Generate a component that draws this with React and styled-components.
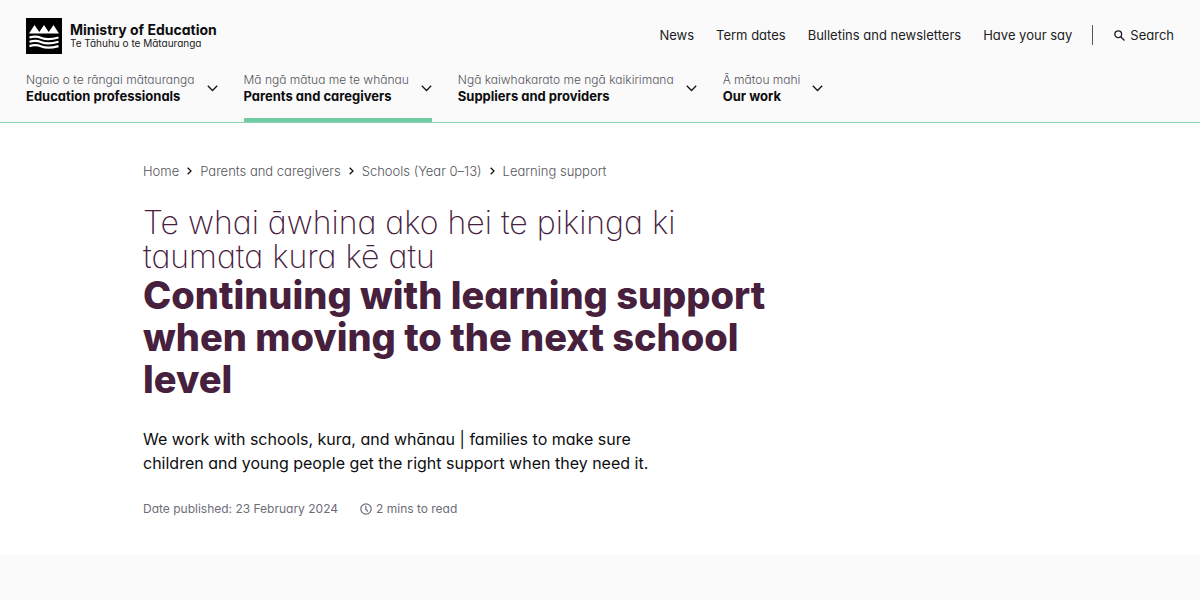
import React from 'react'
import styled, { createGlobalStyle, ThemeProvider } from 'styled-components'

const theme = {
	colors: {
		ink: '#0d0d0f',
		plum: '#46203d',
		text: '#1c1c22',
		muted: '#55555c',
		meta: '#6d6d7a',
		green: '#6fcba2',
		greenLine: '#8fd6b2',
		surface: '#fafafa',
	},
}

const GlobalStyle = createGlobalStyle`
	* {
		box-sizing: border-box;
	}

	body {
		margin: 0;
		background: white;
		color: ${theme.colors.text};
		font-family: Inter, 'Liberation Sans', sans-serif;
		font-feature-settings: 'cv11' 1;
		-webkit-font-smoothing: antialiased;
	}

	h1, p, ul, ol {
		margin: 0;
		padding: 0;
	}

	li {
		list-style: none;
	}

	a {
		color: inherit;
		text-decoration: none;
	}

	button {
		padding: 0;
		border: 0;
		background: none;
		color: inherit;
		font: inherit;
		font-feature-settings: inherit;
		text-align: left;
		cursor: pointer;
	}

	svg {
		display: block;
		flex: none;
	}
`

const Header = styled.header`
	padding: 18px 26px 0 26px;
	background: ${({ theme }) => theme.colors.surface};
	border-bottom: 1px solid ${({ theme }) => theme.colors.greenLine};
`

const TopBar = styled.div`
	display: flex;
	justify-content: space-between;
	align-items: flex-start;
`

const Brand = styled.a`
	display: flex;
	align-items: center;
	gap: 8px;
`

const BrandName = styled.span`
	display: block;
	color: ${({ theme }) => theme.colors.ink};
	font-size: 14px;
	font-weight: 700;
	line-height: 14px;
`

const BrandSub = styled.span`
	display: block;
	font-size: 10px;
	line-height: 12px;
`

const Utility = styled.nav`
	display: flex;
	align-items: center;
	height: 34px;
	font-size: 13px;
`

const UtilityList = styled.ul`
	display: flex;
	gap: 22px;
	margin-right: 20px;
`

const SearchButton = styled.button`
	display: flex;
	align-items: center;
	gap: 5px;
	height: 20px;
	margin-left: 21px;
`

const Divider = styled.span`
	width: 1px;
	height: 20px;
	background: ${({ theme }) => theme.colors.muted};
`

const MainNav = styled.ul`
	display: flex;
	gap: 26px;
	margin-top: 16px;
`

const NavButton = styled.button`
	display: flex;
	align-items: center;
	gap: 12px;
	height: 52px;
	padding-bottom: 12px;
	border-bottom: 4px solid ${({ $active, theme }) => ($active ? theme.colors.green : 'transparent')};
`

const NavMaori = styled.span`
	display: block;
	color: ${({ theme }) => theme.colors.muted};
	font-size: 12px;
	font-weight: 300;
	line-height: 17px;
`

const NavEnglish = styled.span`
	display: block;
	color: ${({ theme }) => theme.colors.ink};
	font-size: 13px;
	font-weight: 700;
	line-height: 17px;
`

const Page = styled.main`
	padding: 38px 143px 38px 143px;
`

const Crumbs = styled.ol`
	display: flex;
	align-items: center;
	gap: 8px;
	color: ${({ theme }) => theme.colors.muted};
	font-size: 13px;
	font-weight: 300;
	line-height: 20px;

	li {
		display: flex;
		align-items: center;
		gap: 8px;
	}
`

const Title = styled.h1`
	max-width: 660px;
	margin-top: 25px;
	color: ${({ theme }) => theme.colors.plum};
	font-size: 38px;
	font-weight: 800;
	line-height: 42px;
`

const TitleMaori = styled.span`
	display: block;
	max-width: 560px;
	font-size: 32px;
	font-weight: 200;
	line-height: 34px;
`

const Intro = styled.p`
	max-width: 540px;
	margin-top: 27px;
	color: ${({ theme }) => theme.colors.ink};
	font-size: 16px;
	line-height: 24px;
`

const Meta = styled.div`
	display: flex;
	gap: 22px;
	margin-top: 25px;
	color: ${({ theme }) => theme.colors.meta};
	font-size: 12px;
	line-height: 17px;
`

const ReadTime = styled.span`
	display: flex;
	align-items: center;
	gap: 4px;
`

const Band = styled.section`
	min-height: 45px;
	background: ${({ theme }) => theme.colors.surface};
`

const Logo = () => (
	<svg width="36" height="36" viewBox="0 0 36 36" aria-hidden="true">
		<path fill="#000" d="M0 0h36v36H0z" />
		<path fill="#fff" d="M3 15.500 8.500 7 13.300 14 18 7 22.700 14 27.500 7 33 15.500z" />
		<g fill="none" stroke="#fff" strokeWidth="2.200">
			<path d="M3.500 19.500c5-1.600 8-1.200 12 .4s9 1.800 17-.4" />
			<path d="M3.500 23.800c5-1.600 8-1.200 12 .4s9 1.800 17-.4" />
			<path d="M3.500 28.100c5-1.600 8-1.200 12 .4s9 1.800 17-.4" />
		</g>
	</svg>
)

const ChevronDown = () => (
	<svg width="11" height="7" viewBox="0 0 11 7" fill="none" stroke="#111" strokeWidth="1.300" aria-hidden="true">
		<path d="M.8.8 5.500 5.500 10.200.8" />
	</svg>
)

const ChevronRight = () => (
	<svg width="5" height="8" viewBox="0 0 5 8" fill="none" stroke="#111" strokeWidth="1.300" aria-hidden="true">
		<path d="M.7.7 4 4 .7 7.300" />
	</svg>
)

const SearchIcon = () => (
	<svg width="11" height="11" viewBox="0 0 11 11" fill="none" stroke="#1c1c22" strokeWidth="1.300" aria-hidden="true">
		<circle cx="4.200" cy="4.200" r="3.400" />
		<path d="m6.700 6.700 3.800 3.800" />
	</svg>
)

const ClockIcon = () => (
	<svg width="12" height="12" viewBox="0 0 12 12" fill="none" stroke="#6d6d7a" strokeWidth="1.200" aria-hidden="true">
		<circle cx="6" cy="6" r="5.200" />
		<path d="M5.800 2.800v3.400l2 2.300" />
	</svg>
)

const utilityLinks = ['News', 'Term dates', 'Bulletins and newsletters', 'Have your say']

const sections = [
	{ maori: 'Ngaio o te rāngai mātauranga', english: 'Education professionals' },
	{ maori: 'Mā ngā mātua me te whānau', english: 'Parents and caregivers', active: true },
	{ maori: 'Ngā kaiwhakarato me ngā kaikirimana', english: 'Suppliers and providers' },
	{ maori: 'Ā mātou mahi', english: 'Our work' },
]

const crumbs = ['Home', 'Parents and caregivers', 'Schools (Year 0–13)', 'Learning support']

const App = () => (
	<ThemeProvider theme={theme}>
		<GlobalStyle />
		<Header>
			<TopBar>
				<Brand href="#">
					<Logo />
					<span>
						<BrandName>Ministry of Education</BrandName>
						<BrandSub>Te Tāhuhu o te Mātauranga</BrandSub>
					</span>
				</Brand>

				<Utility>
					<UtilityList>
						{utilityLinks.map(label => (
							<li key={label}>
								<a href="#">{label}</a>
							</li>
						))}
					</UtilityList>
					<Divider />
					<SearchButton type="button">
						<SearchIcon />
						Search
					</SearchButton>
				</Utility>
			</TopBar>

			<nav>
				<MainNav>
					{sections.map(({ maori, english, active }) => (
						<li key={english}>
							<NavButton type="button" $active={active}>
								<span>
									<NavMaori>{maori}</NavMaori>
									<NavEnglish>{english}</NavEnglish>
								</span>
								<ChevronDown />
							</NavButton>
						</li>
					))}
				</MainNav>
			</nav>
		</Header>

		<Page>
			<nav aria-label="Breadcrumb">
				<Crumbs>
					{crumbs.map((label, index) => (
						<li key={label}>
							{index > 0 && <ChevronRight />}
							<a href="#">{label}</a>
						</li>
					))}
				</Crumbs>
			</nav>

			<Title>
				<TitleMaori>Te whai āwhina ako hei te pikinga ki taumata kura kē atu</TitleMaori>
				Continuing with learning support when moving to the next school level
			</Title>

			<Intro>
				We work with schools, kura, and whānau | families to make sure children and young people get the right
				support when they need it.
			</Intro>

			<Meta>
				<span>Date published: 23 February 2024</span>
				<ReadTime>
					<ClockIcon />2 mins to read
				</ReadTime>
			</Meta>
		</Page>

		<Band />
	</ThemeProvider>
)

export default App
